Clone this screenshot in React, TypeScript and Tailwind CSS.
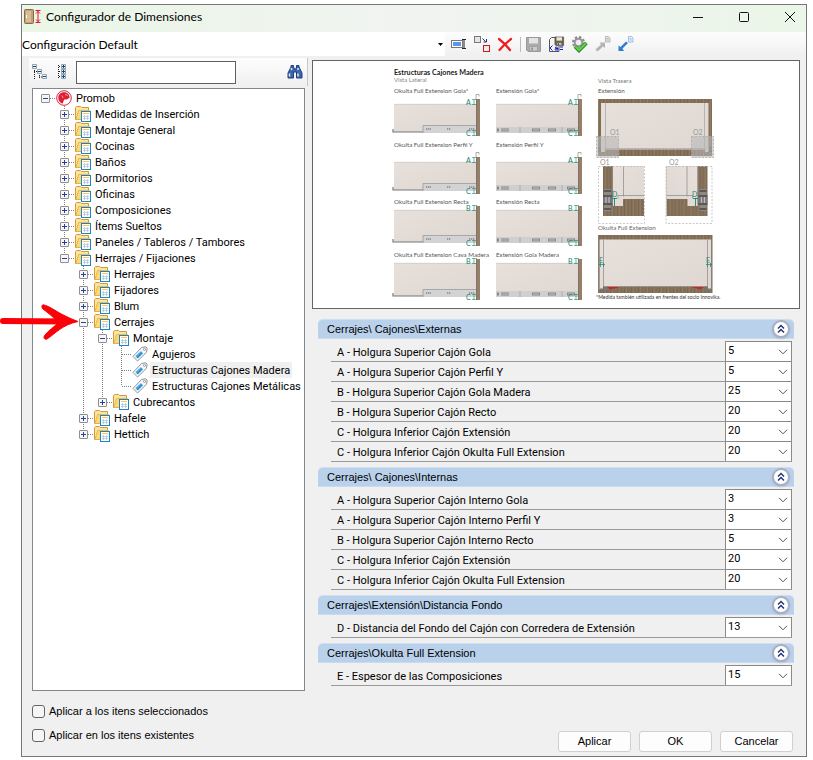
import React from 'react';

type TreeNode = {
  label: string;
  icon?: 'promob' | 'folder' | 'tag';
  open?: boolean;
  selected?: boolean;
  arrow?: boolean;
  children?: TreeNode[];
};

const tree: TreeNode = {
  label: 'Promob',
  icon: 'promob',
  open: true,
  children: [
    { label: 'Medidas de Inserción' },
    { label: 'Montaje General' },
    { label: 'Cocinas' },
    { label: 'Baños' },
    { label: 'Dormitorios' },
    { label: 'Oficinas' },
    { label: 'Composiciones' },
    { label: 'Ítems Sueltos' },
    { label: 'Paneles / Tableros / Tambores' },
    {
      label: 'Herrajes / Fijaciones',
      open: true,
      children: [
        { label: 'Herrajes' },
        { label: 'Fijadores' },
        { label: 'Blum' },
        {
          label: 'Cerrajes',
          open: true,
          arrow: true,
          children: [
            {
              label: 'Montaje',
              open: true,
              children: [
                { label: 'Agujeros', icon: 'tag' },
                { label: 'Estructuras Cajones Madera', icon: 'tag', selected: true },
                { label: 'Estructuras Cajones Metálicas', icon: 'tag' },
              ],
            },
            { label: 'Cubrecantos' },
          ],
        },
        { label: 'Hafele' },
        { label: 'Hettich' },
      ],
    },
  ],
};

const sections = [
  {
    title: 'Cerrajes\\ Cajones\\Externas',
    rows: [
      ['A - Holgura Superior Cajón Gola', '5'],
      ['A - Holgura Superior Cajón Perfil Y', '5'],
      ['B - Holgura Superior Cajón Gola Madera', '25'],
      ['B - Holgura Superior Cajón Recto', '20'],
      ['C - Holgura Inferior Cajón Extensión', '20'],
      ['C - Holgura Inferior Cajón Okulta Full Extension', '20'],
    ],
  },
  {
    title: 'Cerrajes\\ Cajones\\Internas',
    rows: [
      ['A - Holgura Superior Cajón Interno Gola', '3'],
      ['A - Holgura Superior Cajón Interno Perfil Y', '3'],
      ['B - Holgura Superior Cajón Interno Recto', '5'],
      ['C - Holgura Inferior Cajón Extensión', '20'],
      ['C - Holgura Inferior Cajón Okulta Full Extension', '20'],
    ],
  },
  {
    title: 'Cerrajes\\Extensión\\Distancia Fondo',
    rows: [['D - Distancia del Fondo del Cajón con Corredera de Extensión', '13']],
  },
  {
    title: 'Cerrajes\\Okulta Full Extension',
    rows: [['E - Espesor de las Composiciones', '15']],
  },
];

const FolderIcon = () => (
  <svg width="16" height="16" viewBox="0 0 16 16" className="block">
    <path d="M.5 13.500V1.500L1.500.5H5.500L6.500 1.500H13.500V13.500Z" fill="#fbe3a0" stroke="#d39a35" />
    <path d="M1 13.500L3.500 4.500H14.500V13.500Z" fill="#fdd976" stroke="#e0ae50" strokeWidth=".8" />
    <rect x="6.500" y="5.500" width="9" height="10" fill="#fff" stroke="#1f84c0" />
    <path d="M8 7.500h6" stroke="#f2c85a" />
    <path d="M8 10.500h6M8 12.500h6M9.500 9v5M12.500 9v5" stroke="#a9c8e4" strokeWidth=".8" />
  </svg>
);

const TagIcon = () => (
  <svg width="16" height="16" viewBox="0 0 16 16" className="block">
    <path d="M9.500 1.500L13.500.8L15.200 2.200L14.500 6.300L5.500 15L1 10.500Z" fill="#f6f7f8" stroke="#8d9399" />
    <path d="M3.500 10.300L8.800 5.200L11 7.300L5.700 12.500Z" fill="#1e8fd8" />
    <path d="M4 11.300L9.500 5.800" stroke="#6cc0f0" strokeWidth=".8" />
    <circle cx="12.500" cy="3.400" r="1.100" fill="#fff" stroke="#888" strokeWidth=".8" />
  </svg>
);

const PromobIcon = () => (
  <svg width="16" height="16" viewBox="0 0 16 16" className="block">
    <circle cx="8" cy="8" r="7.300" fill="#fff" stroke="#d9243a" strokeWidth="1" />
    <path d="M8 2.200C4.500 2.200 2.300 4.600 2.300 7.800c0 2.800 1.600 5 4.200 5.900L8.200 9.500h2.300l3-1.500c.3-3.500-2-5.800-5.500-5.800Z" fill="#dc1f35" />
    <path d="M9 4.800c1.500-.6 2.400.2 2.200 1.200M6 5.500L7 8" stroke="#fff" strokeWidth=".6" fill="none" />
  </svg>
);

const nodeIcons = { promob: PromobIcon, folder: FolderIcon, tag: TagIcon };

const Branch = ({ up, down, right }: { up?: boolean; down?: boolean; right?: boolean }) => (
  <svg width="19" height="16" viewBox="0 0 19 16" className="block shrink-0" stroke="#808080" strokeDasharray="1 1">
    {up && <path d="M9.500 0V8" />}
    {down && <path d="M9.500 8V16" />}
    {right && <path d="M10 8.500H19" />}
  </svg>
);

const RedArrow = () => (
  <svg width="82" height="38" viewBox="0 0 82 38" className="pointer-events-none absolute right-full z-10 -mr-[6px] max-w-none">
    <path d="M5 18L68 18.500" stroke="#fb0007" strokeWidth="6" strokeLinecap="round" />
    <path d="M46 2C54 4 60 11 80 18.500C64 22 58 30 49 36C46 37 45 34 47 32C51 27 56 24 60 20C56 14 50 10 45 6C43 4 44 1 46 2Z" fill="#fb0007" stroke="#fb0007" />
  </svg>
);

const Node: React.FC<{ node: TreeNode; guides: boolean[]; last: boolean; root?: boolean }> = ({ node, guides, last, root }) => {
  const kind = node.icon ?? 'folder';
  const Icon = nodeIcons[kind];
  return (
    <li>
      <div className="flex h-4 items-center whitespace-nowrap">
        {guides.map((g, i) => <Branch key={i} up={g} down={g} />)}
        <div className="relative flex h-4 items-center">
          <Branch up={!root} down={!last} right />
          {kind !== 'tag' && (
            <button aria-label={node.label} className="absolute left-[5px] top-1 size-[9px] rounded-[1px] border border-[#8f8f8f] bg-[#f6f6f6]">
              <svg width="7" height="7" viewBox="0 0 7 7" className="block" stroke="#26429a">
                <path d="M1 3.500H6" />
                {!node.open && <path d="M3.500 1V6" />}
              </svg>
            </button>
          )}
          {node.arrow && <RedArrow />}
        </div>
        <span className="w-[19px] pl-px"><Icon /></span>
        <span className={`h-4 px-[2px] leading-[18px] ${node.selected ? 'bg-[#f0f0f0]' : ''}`}>{node.label}</span>
      </div>
      {node.children && (
        <ul>
          {node.children.map((child, i) => (
            <Node
              key={child.label}
              node={child}
              guides={[...guides, !root && !last]}
              last={i === node.children!.length - 1}
            />
          ))}
        </ul>
      )}
    </li>
  );
};

const ToolButton = ({ label, children }: { label: string; children: React.ReactNode }) => (
  <button aria-label={label} className="flex w-[23px] shrink-0 items-center">
    <svg width="17" height="17" viewBox="0 0 17 17" fill="none">{children}</svg>
  </button>
);

const Floppy = ({ fill, dark }: { fill: string; dark: string }) => (
  <>
    <path d="M1.500 1.500H15.500V15.500H3L1.500 14Z" fill={fill} stroke={dark} />
    <path d="M4 2H13V7.500H4Z" fill="#e4e4e4" />
    <path d="M4.500 10.500H12.500V15H4.500Z" fill="#ccc" stroke={dark} strokeWidth=".8" />
    <path d="M6 11.500h2v3H6Z" fill={dark} />
  </>
);

const Page = ({ color, fill }: { color: string; fill: string }) => (
  <>
    <path d="M11.500.5H14.500L16 2V6H11.500Z" fill={fill} stroke={color} strokeWidth=".8" />
    <path d="M12.500 2.500h2M12.500 4h2.500" stroke={color} strokeWidth=".7" />
  </>
);

// Vistas laterales: etiqueta izquierda, etiqueta derecha, base del texto, inicio y fin del tablero, letra
const profiles: [string, string, number, number, number, string][] = [
  ['Okulta Full Extension Gola*', 'Extensión Gola*', 93, 104, 133, 'A'],
  ['Okulta Full Extension Perfil Y', 'Extensión Perfil Y', 147, 162, 191, 'A'],
  ['Okulta Full Extension Recta', 'Extensión Recta', 204, 210, 243, 'B'],
  ['Okulta Full Extension Cava Madera', 'Extensión Gola Madera', 257, 263, 297, 'B'],
];

const Mark = ({ x, y, letter }: { x: number; y: number; letter: string }) => (
  <g>
    <text x={x - 1} y={y} fontSize="7" fill="#16866f">{letter}</text>
    <path d={`M${x + 5} ${y - 5.500}h4M${x + 5} ${y - .5}h4M${x + 7} ${y - 5.500}v5`} stroke="#16866f" strokeWidth=".6" />
  </g>
);

const SideView = ({ x, label, base, top, bottom, letter, full }: {
  x: number; label: string; base: number; top: number; bottom: number; letter: string; full?: boolean;
}) => (
  <g>
    <rect x={x} y={top} width="83" height={bottom - top - 1} fill="url(#panel)" />
    <path d={`M${x} ${top + .3}h83`} stroke="#c9c3bf" strokeWidth=".6" />
    {full ? (
      <>
        <rect x={x} y={bottom - 6} width="83" height="6" fill="#cfcfd0" />
        <path d={`M${x + 24} ${bottom - 6}v6M${x + 66} ${bottom - 6}v6`} stroke="#999" strokeWidth=".6" />
        <path d={`M${x + 1} ${bottom - 3}h2M${x + 5} ${bottom - 3}h8M${x + 36} ${bottom - 3}h8M${x + 52} ${bottom - 3}h8M${x + 71} ${bottom - 3}h8`} stroke="#888" strokeWidth="3" />
        <path d={`M${x + 5} ${bottom - 3}h8M${x + 37} ${bottom - 3}h6M${x + 53} ${bottom - 3}h6M${x + 72} ${bottom - 3}h6`} stroke="#ccc" strokeWidth=".9" />
      </>
    ) : (
      <>
        <path d={`M${x - 1} ${bottom - 4}v3h30`} stroke="#777" strokeWidth="1.200" fill="none" />
        <rect x={x + 29} y={bottom - 7} width="54" height="7" fill="#d3d3d5" />
        <path d={`M${x + 29} ${bottom}V${bottom - 7.500}h53`} stroke="#9a9a9a" strokeWidth=".8" fill="none" />
        <path d={`M${x + 32} ${bottom - 4}h5M${x + 53} ${bottom - 4}h4M${x + 75} ${bottom - 4}h6`} stroke="#999" strokeWidth="2" strokeDasharray="1.300 .7" />
      </>
    )}
    <rect x={x + 82} y={letter === 'A' ? top - 5 : top - 4} width="4" height={letter === 'A' ? bottom - top + 8 : bottom - top + 7} fill="#967f68" />
    <path d={`M${x + 82.500} ${top - 5}V${bottom + 3}`} stroke="#7d6f62" strokeWidth=".7" />
    {letter === 'A' && <path d={`M${x + 82} ${top - 5}v-4.500h3v2`} stroke="#999" strokeWidth=".8" fill="none" />}
    <text x={x} y={base} fontSize="6.200" fill="#555">{label}</text>
    <Mark x={x + 73} y={top + 1} letter={letter} />
    <Mark x={x + 73} y={bottom + 3} letter="C" />
  </g>
);

const DetailView = () => (
  <>
    <path d="M603 166h41v50h-41Z" fill="url(#wood)" />
    <path d="M613 166h31v33h-21v7h-10Z" fill="url(#panel)" />
    <path d="M623.500 166v30.500M618 195.500h26M618 198.500v-3M612.500 166v38" stroke="#888" strokeWidth=".7" fill="none" />
    <path d="M604 189h7v22h-7Z" fill="#8d8983" />
    <path d="M604 191h7M603 196h9M603 204h9M604 209h7" stroke="#4a4a4c" strokeWidth="1.300" />
    <path d="M603 200h9" stroke="#77777a" strokeWidth="6" />
    <path d="M606 197v6M609 197v6" stroke="#bcbcc0" strokeWidth="1.300" />
    <path d="M598.500 166.500h46v57h-46Z" stroke="#bbb" strokeWidth=".8" strokeDasharray="2 1.500" fill="none" />
  </>
);

const Drawing = () => (
  <svg viewBox="313 61 486 247" className="block w-full" fontFamily="Lato, 'Open Sans', sans-serif">
    <defs>
      <linearGradient id="panel" x1="0" y1="0" x2="1" y2="1">
        <stop offset="0" stopColor="#e8e0da" />
        <stop offset="1" stopColor="#ded7d2" />
      </linearGradient>
      <pattern id="wood" width="7" height="60" patternUnits="userSpaceOnUse">
        <rect width="7" height="60" fill="#86715a" />
        <path d="M1.500 0v60M5 0v60" stroke="#7c6850" />
        <path d="M3.500 0v60" stroke="#8f7a62" />
      </pattern>
    </defs>
    <text x="394" y="75" fontSize="7.200" fontWeight="700" fill="#222">Estructuras Cajones Madera</text>
    <text x="394" y="82" fontSize="6" fill="#888">Vista Lateral</text>
    {profiles.map(([left, right, base, top, bottom, letter]) => (
      <g key={left}>
        <SideView x={394} label={left} base={base} top={top} bottom={bottom} letter={letter} />
        <SideView x={496} label={right} base={base} top={top} bottom={bottom} letter={letter} full />
      </g>
    ))}

    <text x="598" y="83" fontSize="6" fill="#777">Vista Trasera</text>
    <text x="598" y="93" fontSize="6.200" fill="#555">Extensión</text>
    <path d="M598 99h114v57H598Z" fill="url(#wood)" />
    <path d="M601 103h107.500v49H705v-2.500H605v2.500h-4Z" fill="url(#panel)" />
    <path d="M605.500 103v46M704.500 103v46M604 148.500h102" stroke="#999" strokeWidth=".6" />
    <path d="M599.500 147v6M710.500 147v6" stroke="#555" strokeWidth="2.500" strokeDasharray="2 1" />
    <g fill="#b8b8b8" fillOpacity=".6" stroke="#aaa" strokeWidth=".8" strokeDasharray="2 1.500">
      <path d="M596.500 136.500h22v21h-22ZM691.500 136.500h22v21h-22Z" />
    </g>
    <g fontSize="7" fill="#999">
      <text x="610" y="135">O1</text>
      <text x="693" y="135">O2</text>
      <text x="600" y="165">O1</text>
      <text x="669" y="165">O2</text>
    </g>
    <DetailView />
    <g transform="translate(1310.500 0) scale(-1 1)"><DetailView /></g>
    <g fontSize="7" fill="#16866f">
      <text x="612" y="197">D</text>
      <text x="692" y="197">D</text>
    </g>
    <path d="M612 198.500h5M614.500 198v8M693 198.500h5M695.500 198v8" stroke="#16866f" strokeWidth=".9" />

    <text x="598" y="230" fontSize="6.200" fill="#666">Okulta Full Extension</text>
    <path d="M598 235h114.500v58H598Z" fill="url(#wood)" />
    <path d="M599.500 239.500h111.500v50h-3v-3H603v3h-3.500Z" fill="url(#panel)" />
    <path d="M603.500 240v47M707.500 240v47M603 286.500h105M599 239.500v50M711.500 239.500v50" stroke="#888" strokeWidth=".7" />
    <path d="M600 289.500h8l3-1.500M711 289.500h-8l-3-1.500" stroke="#777" strokeWidth="2" fill="none" />
    <path d="M607 287l13 0-10 2.500ZM704 287h-13l10 2.500Z" fill="#d0221a" />
    <g fontSize="7" fill="#16866f">
      <text x="599" y="263">E</text>
      <text x="706" y="263">E</text>
    </g>
    <path d="M599 264.500h6M600.500 263v4M603.500 263v4M706 264.500h6M707.500 263v4M710.500 263v4" stroke="#16866f" strokeWidth=".7" />
    <text x="596" y="299" fontSize="5.100" fill="#333">*Medida también utilizada en frentes del socio Innovika.</text>
  </svg>
);

const App: React.FC = () => {
  return (
    <div className="min-h-screen bg-white pb-[3px] pl-[21px] pr-[6px] pt-1 font-['Liberation_Sans',Arial,sans-serif] text-[11px] text-black">
      <div className="flex flex-col border border-[#777] bg-[#f0f0f0]">
        <header className="flex h-[27px] items-center bg-linear-to-r from-[#eaf6e6] via-[#f1f3f1] to-[#eaf6e8] pb-[3px] pl-[2px] pr-[10px]">
          <svg width="18" height="18" viewBox="0 0 18 18" fill="none">
            <rect x=".5" y="1.500" width="9" height="14" rx="1" fill="#c4a077" stroke="#8a6a48" />
            <path d="M2 3h5v11h-5Z" fill="#d9bd97" />
            <path d="M2.500 7v3" stroke="#fff" />
            <path d="M11.500 2.500h5M11.500 14.500h5M14 3v11M12 5.500l2-2 2 2M12 11.500l2 2 2-2" stroke="#e0182a" />
          </svg>
          <h1 className="ml-1 font-[Lato,sans-serif] text-[12px]">Configurador de Dimensiones</h1>
          <div className="ml-auto flex items-center gap-[34px]">
            <button aria-label="Minimizar"><svg width="12" height="12" viewBox="0 0 12 12" stroke="#111"><path d="M1 6.500H11" /></svg></button>
            <button aria-label="Maximizar"><svg width="12" height="12" viewBox="0 0 12 12" fill="none" stroke="#111"><rect x="1.500" y="1.500" width="9" height="9" rx="1" /></svg></button>
            <button aria-label="Cerrar"><svg width="12" height="12" viewBox="0 0 12 12" stroke="#111"><path d="M1 1L11 11M11 1L1 11" /></svg></button>
          </div>
        </header>

        <div className="flex h-6">
          <div className="relative w-[54%] bg-white">
            <select aria-label="Configuración" className="h-full w-full appearance-none bg-white pt-px font-[Lato,sans-serif] text-[12px]">
              <option>Configuración Default</option>
            </select>
            <svg width="5" height="3" viewBox="0 0 5 3" className="pointer-events-none absolute right-[2px] top-[11px]"><path d="M0 0H5L2.500 3Z" /></svg>
          </div>
          <div className="flex flex-1 items-center bg-linear-to-b from-[#fdfdfd] to-[#f0f0f0] pl-[6px]">
            <ToolButton label="Renombrar">
              <rect x=".5" y="4.500" width="11" height="7" fill="#fff" stroke="#777" />
              <rect x="2" y="6" width="8" height="4" fill="#5c96ec" />
              <path d="M11 3.500h4M11 12.500h4M13 4v8" stroke="#222" />
            </ToolButton>
            <ToolButton label="Duplicar">
              <rect x=".5" y=".5" width="6" height="6" fill="#e6e6e6" stroke="#777" />
              <rect x="9.500" y="9.500" width="6" height="6" fill="#eee" stroke="#d01818" />
              <path d="M8.500 2.500l3 3M12.500 3v3H9.500" stroke="#1c2f80" />
            </ToolButton>
            <ToolButton label="Eliminar">
              <path d="M2 3C6 6 10 10 13 14M14 3C10 6 5 11 2.500 14" stroke="#f01c1c" strokeWidth="2.200" strokeLinecap="round" />
            </ToolButton>
            <span className="mr-1 h-[15px] w-px shrink-0 bg-[#bbb]" />
            <ToolButton label="Guardar"><Floppy fill="#aaa" dark="#999" /></ToolButton>
            <ToolButton label="Guardar como">
              <path d="M1.500 3.500l2-2H11V15.500H1.500Z" fill="#f4f4f4" stroke="#555" />
              <g transform="translate(6 0) scale(.62)"><Floppy fill="#6b6545" dark="#504b38" /></g>
              <path d="M4.500 9.500L2 12l2.500 2.500M7 11.500c2-1 3 0 3 2.500H7.500c-1-.2-.8-1.500.3-1.500H10M12 11h3M12 13.500h3" stroke="#1616d8" />
            </ToolButton>
            <ToolButton label="Aplicar configuración">
              <circle cx="7.500" cy="6.500" r="5" stroke="#8b8b8b" strokeWidth="3" strokeDasharray="2.200 1.700" />
              <circle cx="7.500" cy="6.500" r="3.800" fill="#eee" stroke="#979797" strokeWidth="2" />
              <path d="M4 10.500L8 14.500L15.500 7" stroke="#238a22" strokeWidth="3.600" />
              <path d="M4.500 10.500L8 14L15 7.200" stroke="#64cf4a" strokeWidth="2" />
            </ToolButton>
            <ToolButton label="Exportar">
              <path d="M1.500 13.500L7 8.500L5.500 6.500H11V12L9 10.500L3.500 15.500Z" fill="#b3b3b3" />
              <Page color="#aaa" fill="#e6e6e6" />
            </ToolButton>
            <ToolButton label="Importar">
              <path d="M11 7L5.500 12.500L7 15H1.500V9.500L3.500 11L9 5.500Z" fill="#2f7fd0" />
              <Page color="#85afe0" fill="#eef5ff" />
            </ToolButton>
          </div>
        </div>

        <main className="flex">
          <div className="flex w-[286px] shrink-0 flex-col pl-[7px] pt-[2px]">
            <div className="mb-[2px] flex h-7 items-center border-r border-[#c8c8c8] bg-linear-to-b from-[#fdfdfd] to-[#f0f0f0] pl-[3px] pr-1">
              <button aria-label="Contraer todo" className="w-6">
                <svg width="16" height="16" viewBox="0 0 16 16" fill="none">
                  <path d="M2.500 4v11M2 7.500h4M7.500 9v6M7 13h4" stroke="#222" strokeDasharray="1 1" />
                  <path d="M.5.5h4v4h-4ZM5.500 5.500h4v4h-4ZM10.500 10.500h4v4h-4Z" fill="#eef4f8" stroke="#8fa5b3" />
                  <path d="M1 2.500h3M6 7.500h3M11 12.500h3" stroke="#246" />
                </svg>
              </button>
              <button aria-label="Expandir todo" className="w-5">
                <svg width="16" height="16" viewBox="0 0 16 16" fill="none">
                  <path d="M2.500 1v14M3 2.500h2M3 7.500h2M3 12.500h2" stroke="#222" strokeDasharray="1 1" />
                  <path d="M5.500.5h4v4h-4ZM5.500 5.500h4v4h-4ZM5.500 10.500h4v4h-4Z" fill="#eef4f8" stroke="#8fa5b3" />
                  <path d="M6 2.500h3M6 7.500h3M6 12.500h3M7.500 1v3M7.500 6v3M7.500 11v3" stroke="#246" />
                </svg>
              </button>
              <input aria-label="Buscar" className="h-[23px] w-40 border border-[#5f5f5f] bg-white px-1 outline-none" />
              <button aria-label="Buscar siguiente" className="ml-auto">
                <svg width="16" height="16" viewBox="0 0 16 16" fill="none">
                  <path d="M1 9L4 3V1.500H6.500V3L7.500 5H9L9.500 3V1.500H12V3L15 9V14H9.500V8H6.500V14H1Z" fill="#3c67ad" stroke="#1d3e7c" />
                  <path d="M2.500 9.500v3M11 9.500v3M4.500 4v2M11 4v2" stroke="#dbe7f7" strokeWidth="1.500" />
                </svg>
              </button>
            </div>
            <ul className="ml-[3px] mr-[3px] min-h-[603px] border border-[#828790] bg-white pl-[3px] pt-px font-[Roboto,sans-serif]">
              <Node node={tree} guides={[]} last root />
            </ul>
          </div>

          <div className="min-w-0 flex-1 pl-1 pr-[6px] pt-1">
            <div className="border border-[#646464] bg-white">
              <Drawing />
            </div>
            <div className="px-[6px] pt-[10px]">
              {sections.map((section) => (
                <section key={section.title} className="pb-[5px]">
                  <div className="mb-[3px] flex h-5 items-center justify-between rounded-t-[5px] border-b border-t border-b-[#c9dbef] border-t-[#cfdff1] bg-[#b9d1ea] pl-[9px] pr-1">
                    <h2 className="leading-4">{section.title}</h2>
                    <button aria-label="Contraer sección" className="flex size-[18px] items-center justify-center rounded-full border-2 border-[#a9b0c4] bg-white shadow-sm">
                      <svg width="10" height="10" viewBox="0 0 10 10" fill="none" stroke="#1d2f6f" strokeWidth="1.400">
                        <path d="M2 4.500L5 1.500L8 4.500M2 8.500L5 5.500L8 8.500" />
                      </svg>
                    </button>
                  </div>
                  <div className="ml-[13px] mr-[2px] font-[Roboto,sans-serif]">
                    {section.rows.map(([label, value], i) => {
                      const id = `${section.title}-${i}`;
                      return (
                        <div key={id} className="flex h-5 border-b border-[#9a9a9a]">
                          <label htmlFor={id} className="min-w-0 flex-1 truncate pl-[6px] pt-px leading-5">{label}</label>
                          <div className="relative -mt-px w-[67px] border-x border-t border-[#8a8a8a] bg-white">
                            <select id={id} className="h-full w-full appearance-none bg-white pb-[2px] pl-[2px] leading-4">
                              <option>{value}</option>
                            </select>
                            <svg width="10" height="6" viewBox="0 0 10 6" className="pointer-events-none absolute right-[3px] top-[7px]" fill="none" stroke="#555">
                              <path d="M1 .8L5 4.800L9 .8" />
                            </svg>
                          </div>
                        </div>
                      );
                    })}
                  </div>
                </section>
              ))}
            </div>
          </div>
        </main>

        <footer className="flex items-end justify-between pb-1 pl-[10px] pr-[13px] pt-[14px]">
          <div className="flex flex-col gap-[11px] pb-[10px]">
            {['Aplicar a los itens seleccionados', 'Aplicar en los itens existentes'].map((text) => (
              <label key={text} className="flex h-[13px] items-center gap-1">
                <input type="checkbox" className="size-[13px] appearance-none rounded-[3px] border border-[#666] bg-[#f6f6f6]" />
                {text}
              </label>
            ))}
          </div>
          <div className="flex gap-2">
            {['Aplicar', 'OK', 'Cancelar'].map((text) => (
              <button key={text} className="h-[21px] w-[73px] rounded-[3px] border border-[#d0d0d0] bg-[#fdfdfd]">{text}</button>
            ))}
          </div>
        </footer>
      </div>
    </div>
  );
};

export default App;
